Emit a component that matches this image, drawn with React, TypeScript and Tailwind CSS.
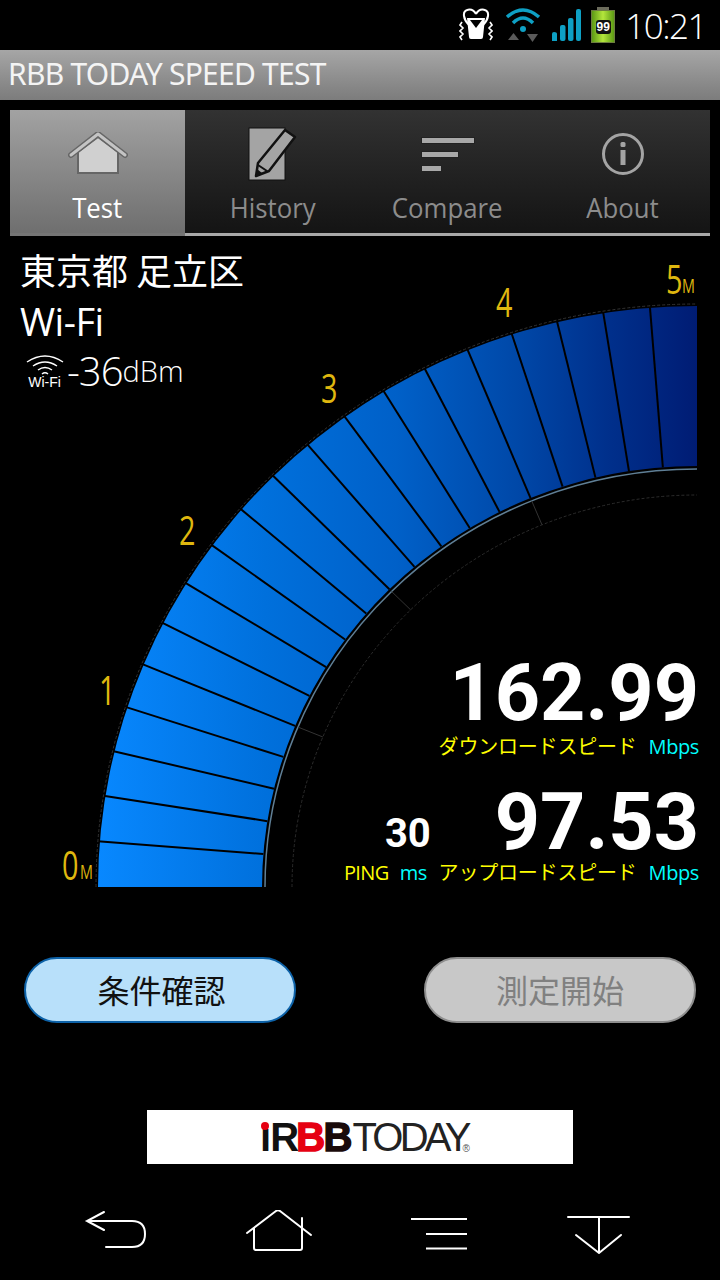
import React from 'react';

const CX = 697;
const CY = 887;

// gauge is slightly squashed: every radius is [rx, ry]
const pt = (r: number[], deg: number) => {
  const a = (deg * Math.PI) / 180;
  return [CX - r[0] * Math.cos(a), CY - r[1] * Math.sin(a)];
};

const arc = (r: number[], from = 0, to = 90) => {
  const p0 = pt(r, from);
  const p1 = pt(r, to);
  return `M${p0[0]} ${p0[1]}A${r[0]} ${r[1]} 0 0 1 ${p1[0]} ${p1[1]}`;
};

const OUTER = [599, 581];
const OUTER_LINE = [601, 583];
const INNER = [435, 421];
const INNER_LINE = [432, 418];
const DASHED = [405, 392];
const dividers = Array.from({ length: 19 }, (_, i) => (i + 1) * 4.5);
const ticks = [22.5, 45, 67.5];

// narrow yellow scale digits
function ScaleLabel({ x, y, size = 40, text }: { x: number; y: number; size?: number; text: string }) {
  return (
    <text x={0} y={0} fontSize={size} transform={`translate(${x} ${y}) scale(0.72 1)`}>
      {text}
    </text>
  );
}

function Gauge() {
  const band = `${arc(OUTER)}L${CX} ${CY - INNER[1]}A${INNER[0]} ${INNER[1]} 0 0 0 ${CX - INNER[0]} ${CY}Z`;
  return (
    <svg className="absolute inset-0" width="720" height="664" viewBox="0 236 720 664">
      <defs>
        <linearGradient id="band" gradientUnits="userSpaceOnUse" x1="98" y1="0" x2="697" y2="0">
          <stop offset="0" stopColor="#0888ff" />
          <stop offset="0.28" stopColor="#0070dc" />
          <stop offset="0.5" stopColor="#0060c8" />
          <stop offset="0.7" stopColor="#0048a8" />
          <stop offset="0.85" stopColor="#00308c" />
          <stop offset="1" stopColor="#001c74" />
        </linearGradient>
      </defs>
      <path d={band} fill="url(#band)" />
      {dividers.map((d) => {
        const a = pt(OUTER_LINE, d);
        const b = pt(INNER, d);
        return <line key={d} x1={a[0]} y1={a[1]} x2={b[0]} y2={b[1]} stroke="#000" strokeWidth="2" />;
      })}
      <path d={arc(OUTER_LINE)} fill="none" stroke="#333" strokeWidth="1" strokeDasharray="3 2" />
      <path d={arc(INNER_LINE)} fill="none" stroke="#5f7f96" strokeWidth="1.5" />
      <path d={arc(DASHED)} fill="none" stroke="#2c2c2c" strokeWidth="1" strokeDasharray="3 2" />
      {ticks.map((d) => {
        const a = pt(INNER_LINE, d);
        const b = pt(DASHED, d);
        return <line key={d} x1={a[0]} y1={a[1]} x2={b[0]} y2={b[1]} stroke="#333" strokeWidth="1" />;
      })}
      <g fill="#dfb70f" fontFamily="'Open Sans', sans-serif">
        <ScaleLabel x={62} y={880} text="0" />
        <ScaleLabel x={80} y={879} size={20} text="M" />
        <ScaleLabel x={99} y={705} text="1" />
        <ScaleLabel x={179} y={545} text="2" />
        <ScaleLabel x={321} y={403} text="3" />
        <ScaleLabel x={496} y={317} text="4" />
        <ScaleLabel x={666} y={294} text="5" />
        <ScaleLabel x={682} y={293} size={20} text="M" />
      </g>
    </svg>
  );
}

function StatusIcons() {
  return (
    <div className="flex items-center">
      {/* vibrate + heart */}
      <svg width="34" height="34" viewBox="0 0 34 34" className="mr-[12px]">
        <path d="M17 6 C13 -1 4 1 5 8 C5.500 12 8 15 10 17 M17 6 C21 -1 30 1 29 8 C28.500 12 26 15 24 17" fill="none" stroke="#fff" strokeWidth="2" />
        <path d="M8 10 H26 L24 29 Q24 31 22 31 H12 Q10 31 10 29 Z" fill="#fff" />
        <path d="M11 12 H23 L17 20 Z" fill="#000" />
        <path d="M3 14 L1 17 L4 20 L1 23 L4 26 L1 29 L3 32 M31 14 L33 17 L30 20 L33 23 L30 26 L33 29 L31 32" fill="none" stroke="#fff" strokeWidth="1.6" />
      </svg>
      {/* wifi with traffic arrows */}
      <svg width="36" height="38" viewBox="0 0 36 38" className="mr-[10px]">
        <path d="M2 11 Q18 -3 34 11" fill="none" stroke="#0ea0c4" strokeWidth="3.500" />
        <path d="M8 17 Q18 7 28 17" fill="none" stroke="#0ea0c4" strokeWidth="3.500" />
        <circle cx="18" cy="23" r="3" fill="#0ea0c4" />
        <path d="M3 34 L8.500 27 L14 34 Z M22 28 H33 L27.500 36 Z" fill="#5a5a5a" />
      </svg>
      {/* signal */}
      <svg width="30" height="34" viewBox="0 0 30 34" className="mr-[10px]">
        <path d="M1 26 Q1 24 3 24 H3 Q6 24 6 26 V33 H1 Z" fill="#0ea0c4" />
        <rect x="9" y="17" width="5.500" height="16" rx="2" fill="#0ea0c4" />
        <rect x="17" y="10" width="5.500" height="23" rx="2" fill="#0ea0c4" />
        <rect x="25" y="1" width="5" height="32" rx="2" fill="#0ea0c4" />
      </svg>
      {/* battery */}
      <div className="mr-[10px] flex flex-col items-center">
        <div className="h-[3px] w-[12px] bg-[#6c6c5c]" />
        <div className="flex h-[33px] w-[24px] items-center justify-center border border-[#6d7d40] bg-gradient-to-r from-[#5c9a14] via-[#b4e63c] to-[#5c9a14]">
          <span className="rounded-[3px] bg-[#111] px-[1px] font-['Liberation_Sans',sans-serif] text-[12px] leading-[14px] font-bold text-white">99</span>
        </div>
      </div>
      <span className="font-['Open_Sans',sans-serif] text-[35px] leading-none font-light tracking-[-1.5px] text-white">10:21</span>
    </div>
  );
}

function HomeIcon() {
  return (
    <svg width="60" height="44" viewBox="0 0 60 44">
      <path d="M10 20 V41 H50 V20 L30 5 Z" fill="#d0d0d0" stroke="#666" strokeWidth="2" />
      <path d="M3 23 L30 2 L57 23" fill="none" stroke="#666" strokeWidth="6" strokeLinejoin="round" strokeLinecap="round" />
      <path d="M3 23 L30 2 L57 23" fill="none" stroke="#c4c4c4" strokeWidth="3" strokeLinejoin="round" strokeLinecap="round" />
    </svg>
  );
}

function HistoryIcon() {
  return (
    <svg width="52" height="54" viewBox="0 0 52 54">
      <rect x="2" y="1" width="36" height="52" fill="#a4a4a4" stroke="#111" strokeWidth="1" />
      <path d="M38 3 L48 10 L22 44 L9 49 L11 36 Z" fill="#a4a4a4" stroke="#111" strokeWidth="2.500" strokeLinejoin="round" />
      <path d="M11 38 L20 44" stroke="#111" strokeWidth="2" />
      <path d="M9 49 L10 42 L15 46 Z" fill="#111" />
    </svg>
  );
}

function CompareIcon() {
  return (
    <div className="flex w-[54px] flex-col gap-[7px]">
      <div className="h-[7px] w-[54px] border border-[#222] bg-[#a8a8a8]" />
      <div className="h-[7px] w-[38px] border border-[#222] bg-[#a8a8a8]" />
      <div className="h-[7px] w-[21px] border border-[#222] bg-[#a8a8a8]" />
    </div>
  );
}

function AboutIcon() {
  return (
    <svg width="44" height="44" viewBox="0 0 44 44">
      <circle cx="22" cy="22" r="19.500" fill="none" stroke="#a4a4a4" strokeWidth="3" />
      <rect x="19.500" y="10" width="5" height="5" rx="1.500" fill="#a4a4a4" />
      <rect x="19.500" y="18" width="5" height="15" fill="#a4a4a4" />
    </svg>
  );
}

const tabs = [
  { label: 'Test', icon: <HomeIcon />, active: true },
  { label: 'History', icon: <HistoryIcon />, active: false },
  { label: 'Compare', icon: <CompareIcon />, active: false },
  { label: 'About', icon: <AboutIcon />, active: false },
];

function NavIcons() {
  return (
    <div className="flex h-[116px] items-start pt-[46px] pl-[84px]">
      <svg width="64" height="42" viewBox="0 0 64 42" className="mr-[98px]" fill="none" stroke="#fff" strokeWidth="2" strokeLinecap="round">
        <path d="M20 2 L3 11 L20 20 M3 11 H48 Q61 11 61 24 Q61 37 48 37 H22" />
      </svg>
      <svg width="66" height="42" viewBox="0 0 66 42" className="mr-[99px]" fill="none" stroke="#fff" strokeWidth="2" strokeLinecap="round" strokeLinejoin="round">
        <path d="M1 23 L30 1 Q32 -0.500 34 1 L65 25 M56 8 V38 Q56 40 54 40 H10 Q8 40 8 38 V18" />
      </svg>
      <svg width="56" height="36" viewBox="0 0 56 36" className="mt-[7px] mr-[100px]" fill="none" stroke="#fff" strokeWidth="2">
        <path d="M0 2 H56 M15 17 H56 M15 31.500 H56" />
      </svg>
      <svg width="64" height="40" viewBox="0 0 64 40" className="mt-[5px]" fill="none" stroke="#fff" strokeWidth="2" strokeLinecap="round" strokeLinejoin="round">
        <path d="M1 2 H62 M32 2 V36 M9 20 L32 38 L54 20" />
      </svg>
    </div>
  );
}

export default function App() {
  return (
    <div className="flex h-[1280px] w-[720px] flex-col overflow-hidden bg-black font-['Open_Sans','Noto_Sans_CJK_JP',sans-serif]">
      {/* status bar */}
      <div className="flex h-[50px] items-center justify-end pr-[14px]">
        <StatusIcons />
      </div>

      {/* title */}
      <div className="flex h-[50px] items-center bg-gradient-to-b from-[#a6a6a6] to-[#7c7c7c] pb-[3px] pl-[8px]">
        <span className="font-['Noto_Sans',sans-serif] text-[30px] leading-none tracking-[-0.75px] text-[#f4f4f4]">RBB TODAY SPEED TEST</span>
      </div>

      {/* tabs */}
      <div className="mx-[10px] mt-[10px] flex h-[126px]">
        {tabs.map((t) => (
          <div
            key={t.label}
            className={
              t.active
                ? 'flex w-[175px] flex-col items-center border-b-[3px] border-[#757575] bg-gradient-to-b from-[#a2a2a2] to-[#6f6f6f]'
                : 'flex w-[175px] flex-col items-center border-b-[3px] border-[#a8a8a8] bg-gradient-to-b from-[#323232] to-[#141414]'
            }
          >
            <div className="flex h-[78px] items-center justify-center pt-[10px]">{t.icon}</div>
            <span className={t.active ? 'scale-x-[0.92] text-[28px] leading-[38px] text-white' : 'scale-x-[0.92] text-[28px] leading-[38px] text-[#8c8c8c]'}>
              {t.label}
            </span>
          </div>
        ))}
      </div>

      {/* gauge area */}
      <div className="relative flex h-[664px] flex-col justify-between pb-[13px]">
        <Gauge />
        <div className="relative flex flex-col items-start pt-[10px] pl-[19px] text-white">
          <span className="pl-[1px] font-['Noto_Sans_CJK_JP',sans-serif] text-[36px] leading-[46px]">東京都 足立区</span>
          <span className="mt-[5px] pl-[1px] text-[38px] leading-[48px] tracking-[-0.5px]">Wi-Fi</span>
          <div className="flex items-center pt-[2px] pl-[2px]">
            <div className="flex w-[46px] flex-col items-center pl-[1px]">
              <svg width="40" height="22" viewBox="0 0 40 22" fill="none" stroke="#fff" strokeWidth="1.500">
                <path d="M2 8 Q20 -4 38 8 M8 12 Q20 4 32 12 M13 16 Q20 11 27 16" />
                <path d="M17 20 Q20 17.500 23 20" />
              </svg>
              <span className="font-['Liberation_Sans',sans-serif] text-[14px] leading-[12px]">Wi-Fi</span>
            </div>
            <span className="text-[40px] leading-[48px] font-light tracking-[-1px]">-36</span>
            <span className="text-[29px] leading-[48px] font-light">dBm</span>
          </div>
        </div>

        <div className="relative flex flex-col items-end pr-[21px]">
          <span className="font-['Roboto',sans-serif] text-[79px] leading-[72px] font-bold text-white">162.99</span>
          <div className="mt-[6px] flex h-[24px] items-center text-[20px] leading-none">
            <span className="tracking-[-0.2px] text-[#ffff00]">ダウンロードスピード</span>
            <span className="ml-[12px] tracking-[-0.4px] text-[#00ffff]">Mbps</span>
          </div>
          <div className="mt-[27px] flex items-end">
            <span className="mr-[64px] mb-[2px] font-['Roboto',sans-serif] text-[40px] leading-[44px] font-bold text-white">30</span>
            <span className="font-['Roboto',sans-serif] text-[79px] leading-[72px] font-bold text-white">97.53</span>
          </div>
          <div className="mt-[3px] flex h-[24px] items-center pb-0 text-[20px] leading-none">
            <span className="tracking-[-0.6px] text-[#ffff00]">PING</span>
            <span className="ml-[11px] tracking-[-0.6px] text-[#00ffff]">ms</span>
            <span className="ml-[12px] tracking-[-0.2px] text-[#ffff00]">アップロードスピード</span>
            <span className="ml-[12px] tracking-[-0.4px] text-[#00ffff]">Mbps</span>
          </div>
          <div className="h-[2px]" />
        </div>
      </div>

      {/* buttons */}
      <div className="mt-[57px] flex justify-between px-[24px]">
        <button className="h-[66px] w-[272px] rounded-[33px] border-2 border-[#0d62a8] bg-[#b8e0fa] pb-[3px] pl-[3px] font-['Noto_Sans_CJK_JP',sans-serif] text-[32px] leading-none text-[#111]">
          条件確認
        </button>
        <button className="h-[66px] w-[272px] rounded-[33px] border-2 border-[#8e8e8e] bg-[#c8c8c8] pb-[3px] font-['Noto_Sans_CJK_JP',sans-serif] text-[32px] leading-none text-[#808080]">
          測定開始
        </button>
      </div>

      {/* banner */}
      <div className="mx-[147px] mt-[87px] flex h-[54px] items-center justify-center bg-white pl-[10px] font-['Liberation_Sans',sans-serif]">
        <span className="relative text-[40px] leading-none font-bold tracking-[-1px] text-[#111]">
          ı
          <span className="absolute top-[5px] left-[1px] h-[8px] w-[8px] rounded-full bg-[#e60012]" />
        </span>
        <span className="text-[40px] leading-none font-bold tracking-[-3px] text-[#111]">R</span>
        <span className="text-[40px] leading-none font-bold tracking-[-1.500px] text-[#e60012] [-webkit-text-stroke:1.5px_#e60012]">B</span>
        <span className="text-[40px] leading-none font-bold tracking-[-1px] text-[#1a0a0a] [-webkit-text-stroke:1.5px_#1a0a0a]">B</span>
        <span className="ml-[1px] text-[40px] leading-[28px] tracking-[-3.8px] text-[#222]">TODAY</span>
        <span className="mt-[24px] ml-[-5px] text-[10px] leading-none text-[#555]">®</span>
      </div>

      <NavIcons />
    </div>
  );
}
